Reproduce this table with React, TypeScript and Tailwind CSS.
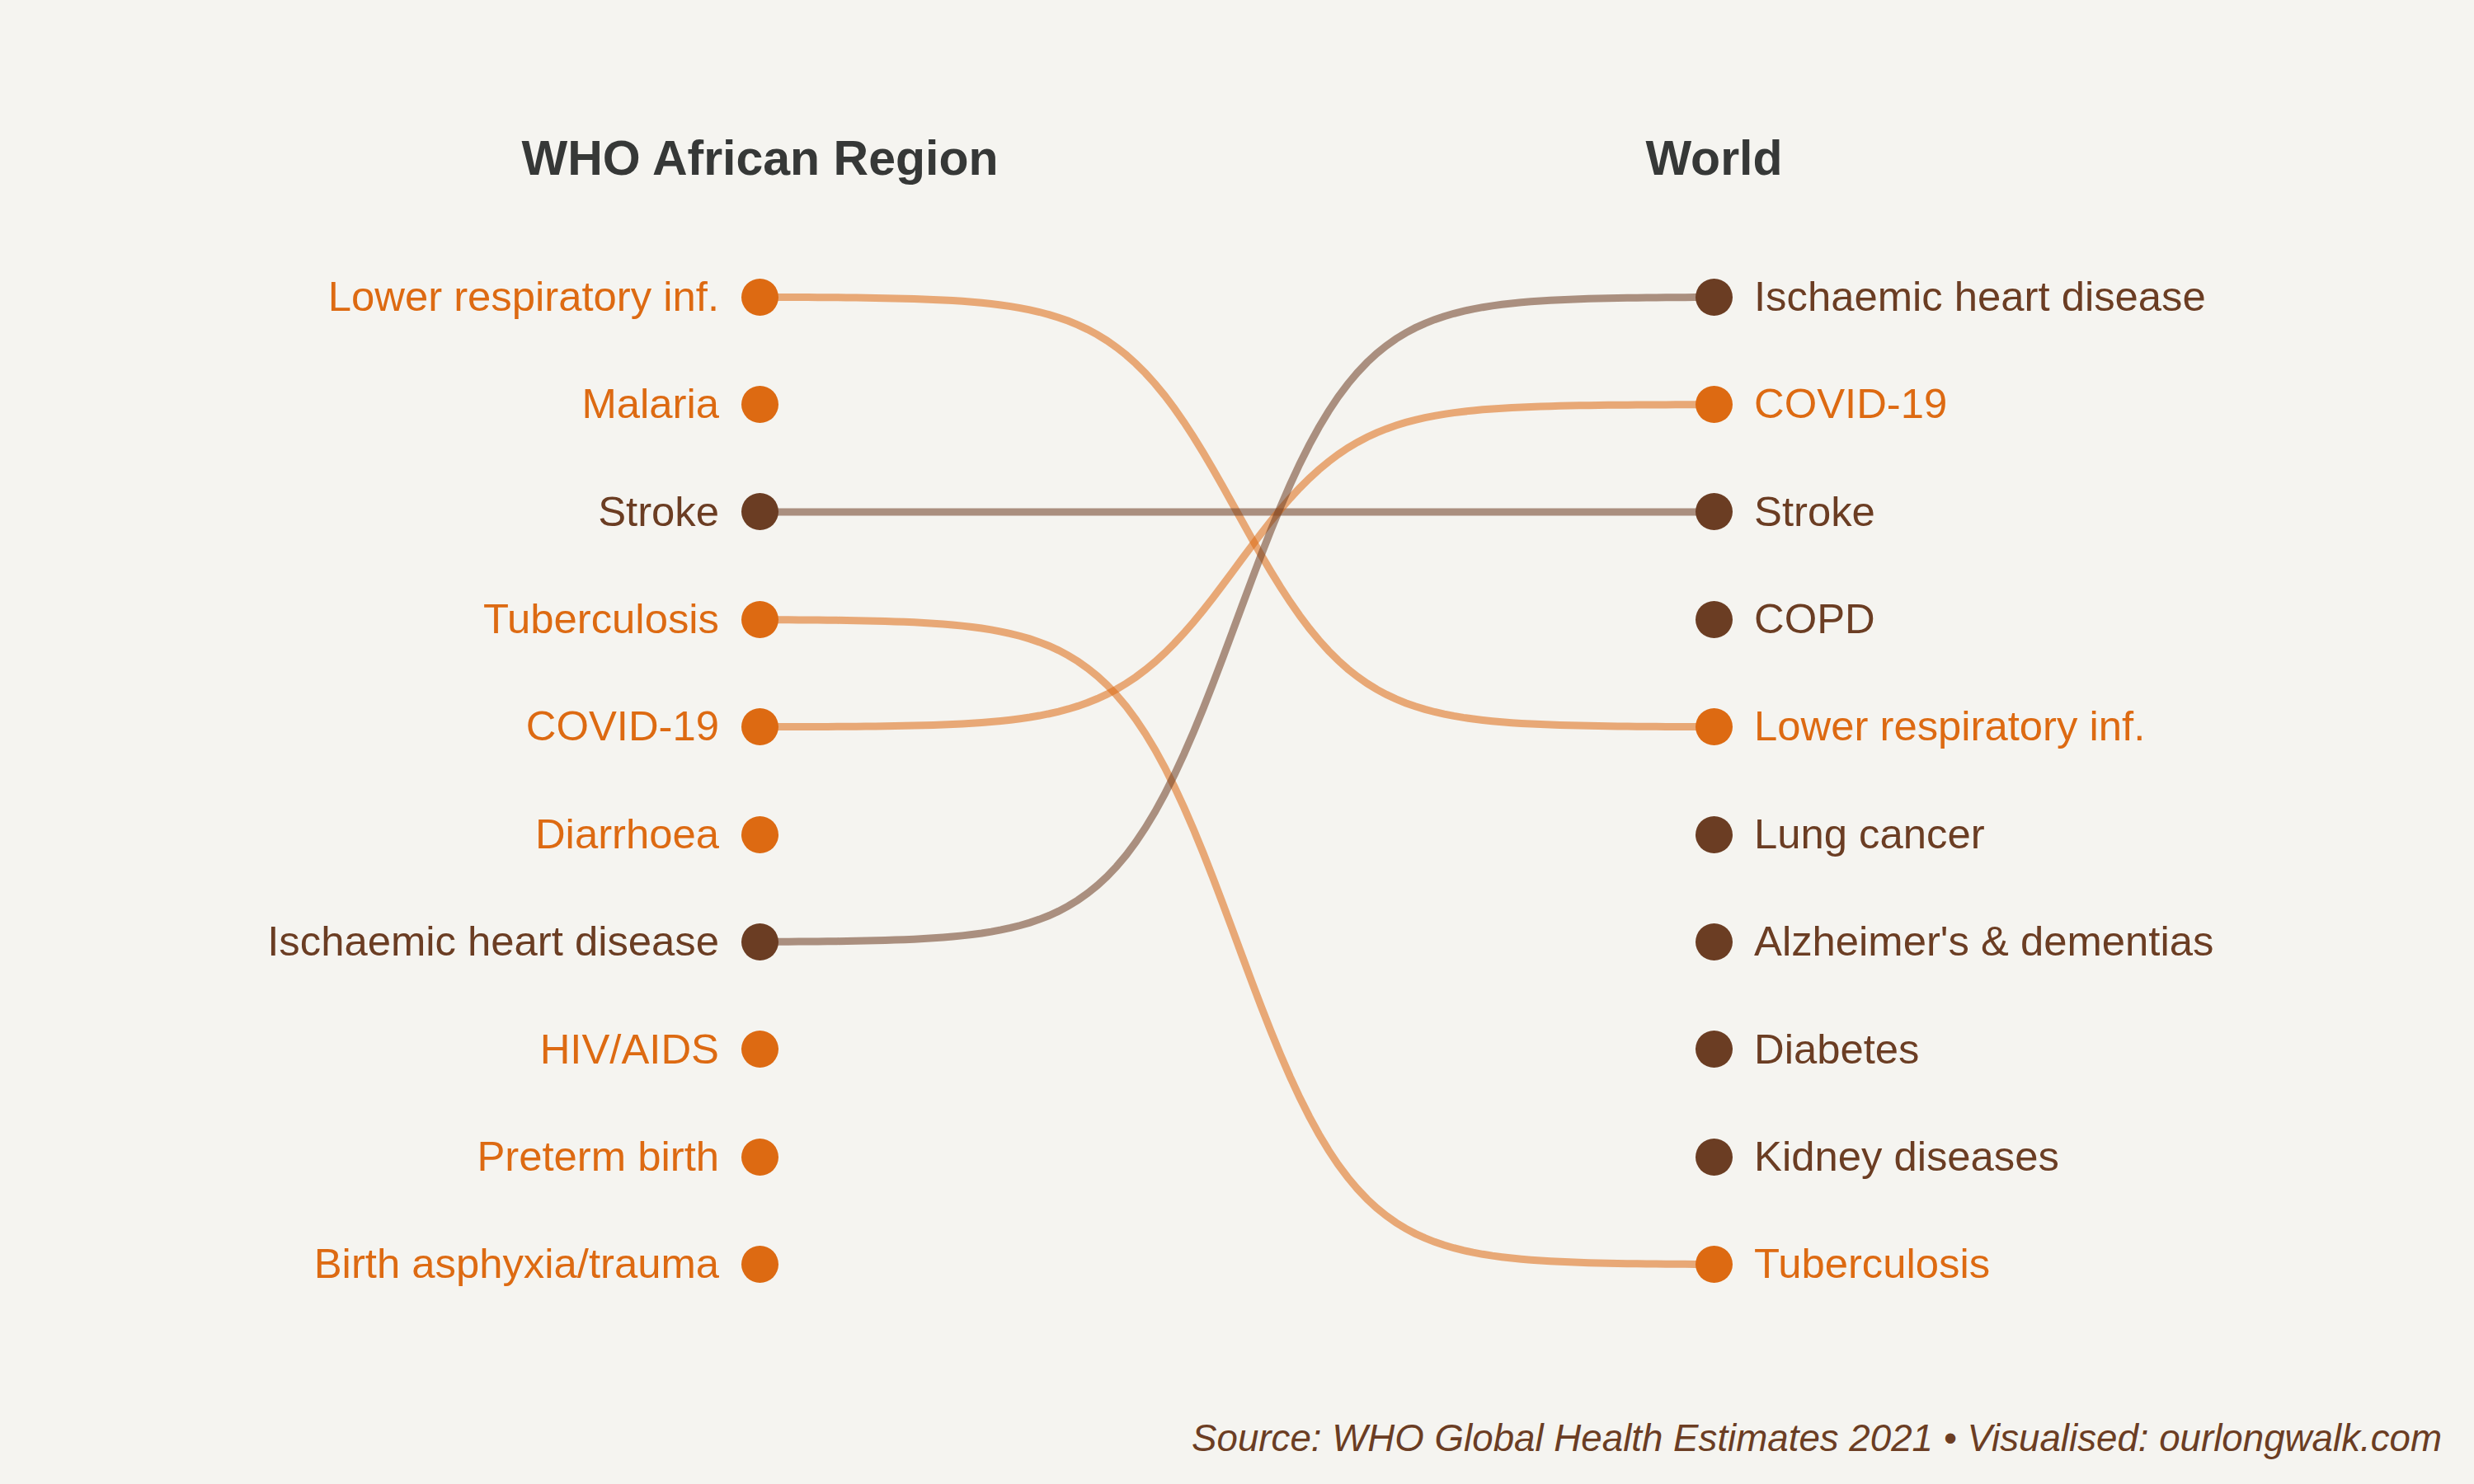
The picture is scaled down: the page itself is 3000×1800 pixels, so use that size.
type Tone = 'orange' | 'brown'

interface Cause {
  name: string
  tone: Tone
}

const african: Cause[] = [
  { name: 'Lower respiratory inf.', tone: 'orange' },
  { name: 'Malaria', tone: 'orange' },
  { name: 'Stroke', tone: 'brown' },
  { name: 'Tuberculosis', tone: 'orange' },
  { name: 'COVID-19', tone: 'orange' },
  { name: 'Diarrhoea', tone: 'orange' },
  { name: 'Ischaemic heart disease', tone: 'brown' },
  { name: 'HIV/AIDS', tone: 'orange' },
  { name: 'Preterm birth', tone: 'orange' },
  { name: 'Birth asphyxia/trauma', tone: 'orange' },
]

const world: Cause[] = [
  { name: 'Ischaemic heart disease', tone: 'brown' },
  { name: 'COVID-19', tone: 'orange' },
  { name: 'Stroke', tone: 'brown' },
  { name: 'COPD', tone: 'brown' },
  { name: 'Lower respiratory inf.', tone: 'orange' },
  { name: 'Lung cancer', tone: 'brown' },
  { name: "Alzheimer's & dementias", tone: 'brown' },
  { name: 'Diabetes', tone: 'brown' },
  { name: 'Kidney diseases', tone: 'brown' },
  { name: 'Tuberculosis', tone: 'orange' },
]

const textTone: Record<Tone, string> = {
  orange: 'text-[#dd6a12]',
  brown: 'text-[#6b3d23]',
}

const dotTone: Record<Tone, string> = {
  orange: 'bg-[#dd6a12]',
  brown: 'bg-[#6b3d23]',
}

const strokeTone: Record<Tone, string> = {
  orange: '#dd6a12',
  brown: '#6b3d23',
}

const ROW = 130.4
const X0 = 921.5
const X1 = 2078.5

// ggbump style sigmoid, smooth = 8
function sigmoidPath(y0: number, y1: number) {
  const pts: string[] = []
  for (let k = 0; k < 100; k++) {
    const s = -8 + (16 * k) / 99
    const f = 1 / (1 + Math.exp(-s))
    const x = X0 + ((s + 8) / 16) * (X1 - X0)
    const y = y0 + f * (y1 - y0)
    pts.push(`${x.toFixed(2)},${y.toFixed(2)}`)
  }
  return 'M' + pts.join(' L')
}

function Links() {
  return (
    <svg
      className="absolute left-0 top-0 w-[3000px] h-[1304px]"
      viewBox="0 0 3000 1304"
      fill="none"
    >
      {african.map((c, i) => {
        const j = world.findIndex((w) => w.name === c.name)
        if (j < 0) return null
        return (
          <path
            key={c.name}
            d={sigmoidPath(ROW / 2 + i * ROW, ROW / 2 + j * ROW)}
            stroke={strokeTone[c.tone]}
            strokeOpacity={0.55}
            strokeWidth={9}
          />
        )
      })}
    </svg>
  )
}

export default function App() {
  return (
    <div className="w-[3000px] h-[1800px] bg-[#f5f4f0] flex flex-col font-['Liberation_Sans',Arial,sans-serif]">
      <div className="mt-[162px] h-[60px] grid grid-cols-[899px_45px_1112px_45px_1fr]">
        <div className="col-start-2 flex justify-center">
          <span className="whitespace-nowrap text-[59px] leading-[60px] font-bold text-[#363837]">
            WHO African Region
          </span>
        </div>
        <div className="col-start-4 flex justify-center">
          <span className="whitespace-nowrap text-[59px] leading-[60px] font-bold text-[#363837]">
            World
          </span>
        </div>
      </div>

      <div className="relative mt-[73px]">
        <Links />
        {african.map((left, i) => {
          const right = world[i]
          return (
            <div
              key={i}
              className="h-[130.4px] grid grid-cols-[899px_45px_1112px_45px_1fr] items-center"
            >
              <div
                className={`relative pr-[27px] text-right whitespace-nowrap text-[50.8px] leading-none ${textTone[left.tone]}`}
              >
                {left.name}
              </div>
              <div className={`relative w-[45px] h-[45px] rounded-full ${dotTone[left.tone]}`} />
              <div />
              <div className={`relative w-[45px] h-[45px] rounded-full ${dotTone[right.tone]}`} />
              <div
                className={`relative pl-[26px] whitespace-nowrap text-[50.8px] leading-none ${textTone[right.tone]}`}
              >
                {right.name}
              </div>
            </div>
          )
        })}
      </div>

      <div className="mt-[121px] h-[50px] pr-[39px] text-right italic text-[45.7px] leading-[50px] text-[#6b3d23] whitespace-nowrap">
        Source: WHO Global Health Estimates 2021 • Visualised: ourlongwalk.com
      </div>
    </div>
  )
}
